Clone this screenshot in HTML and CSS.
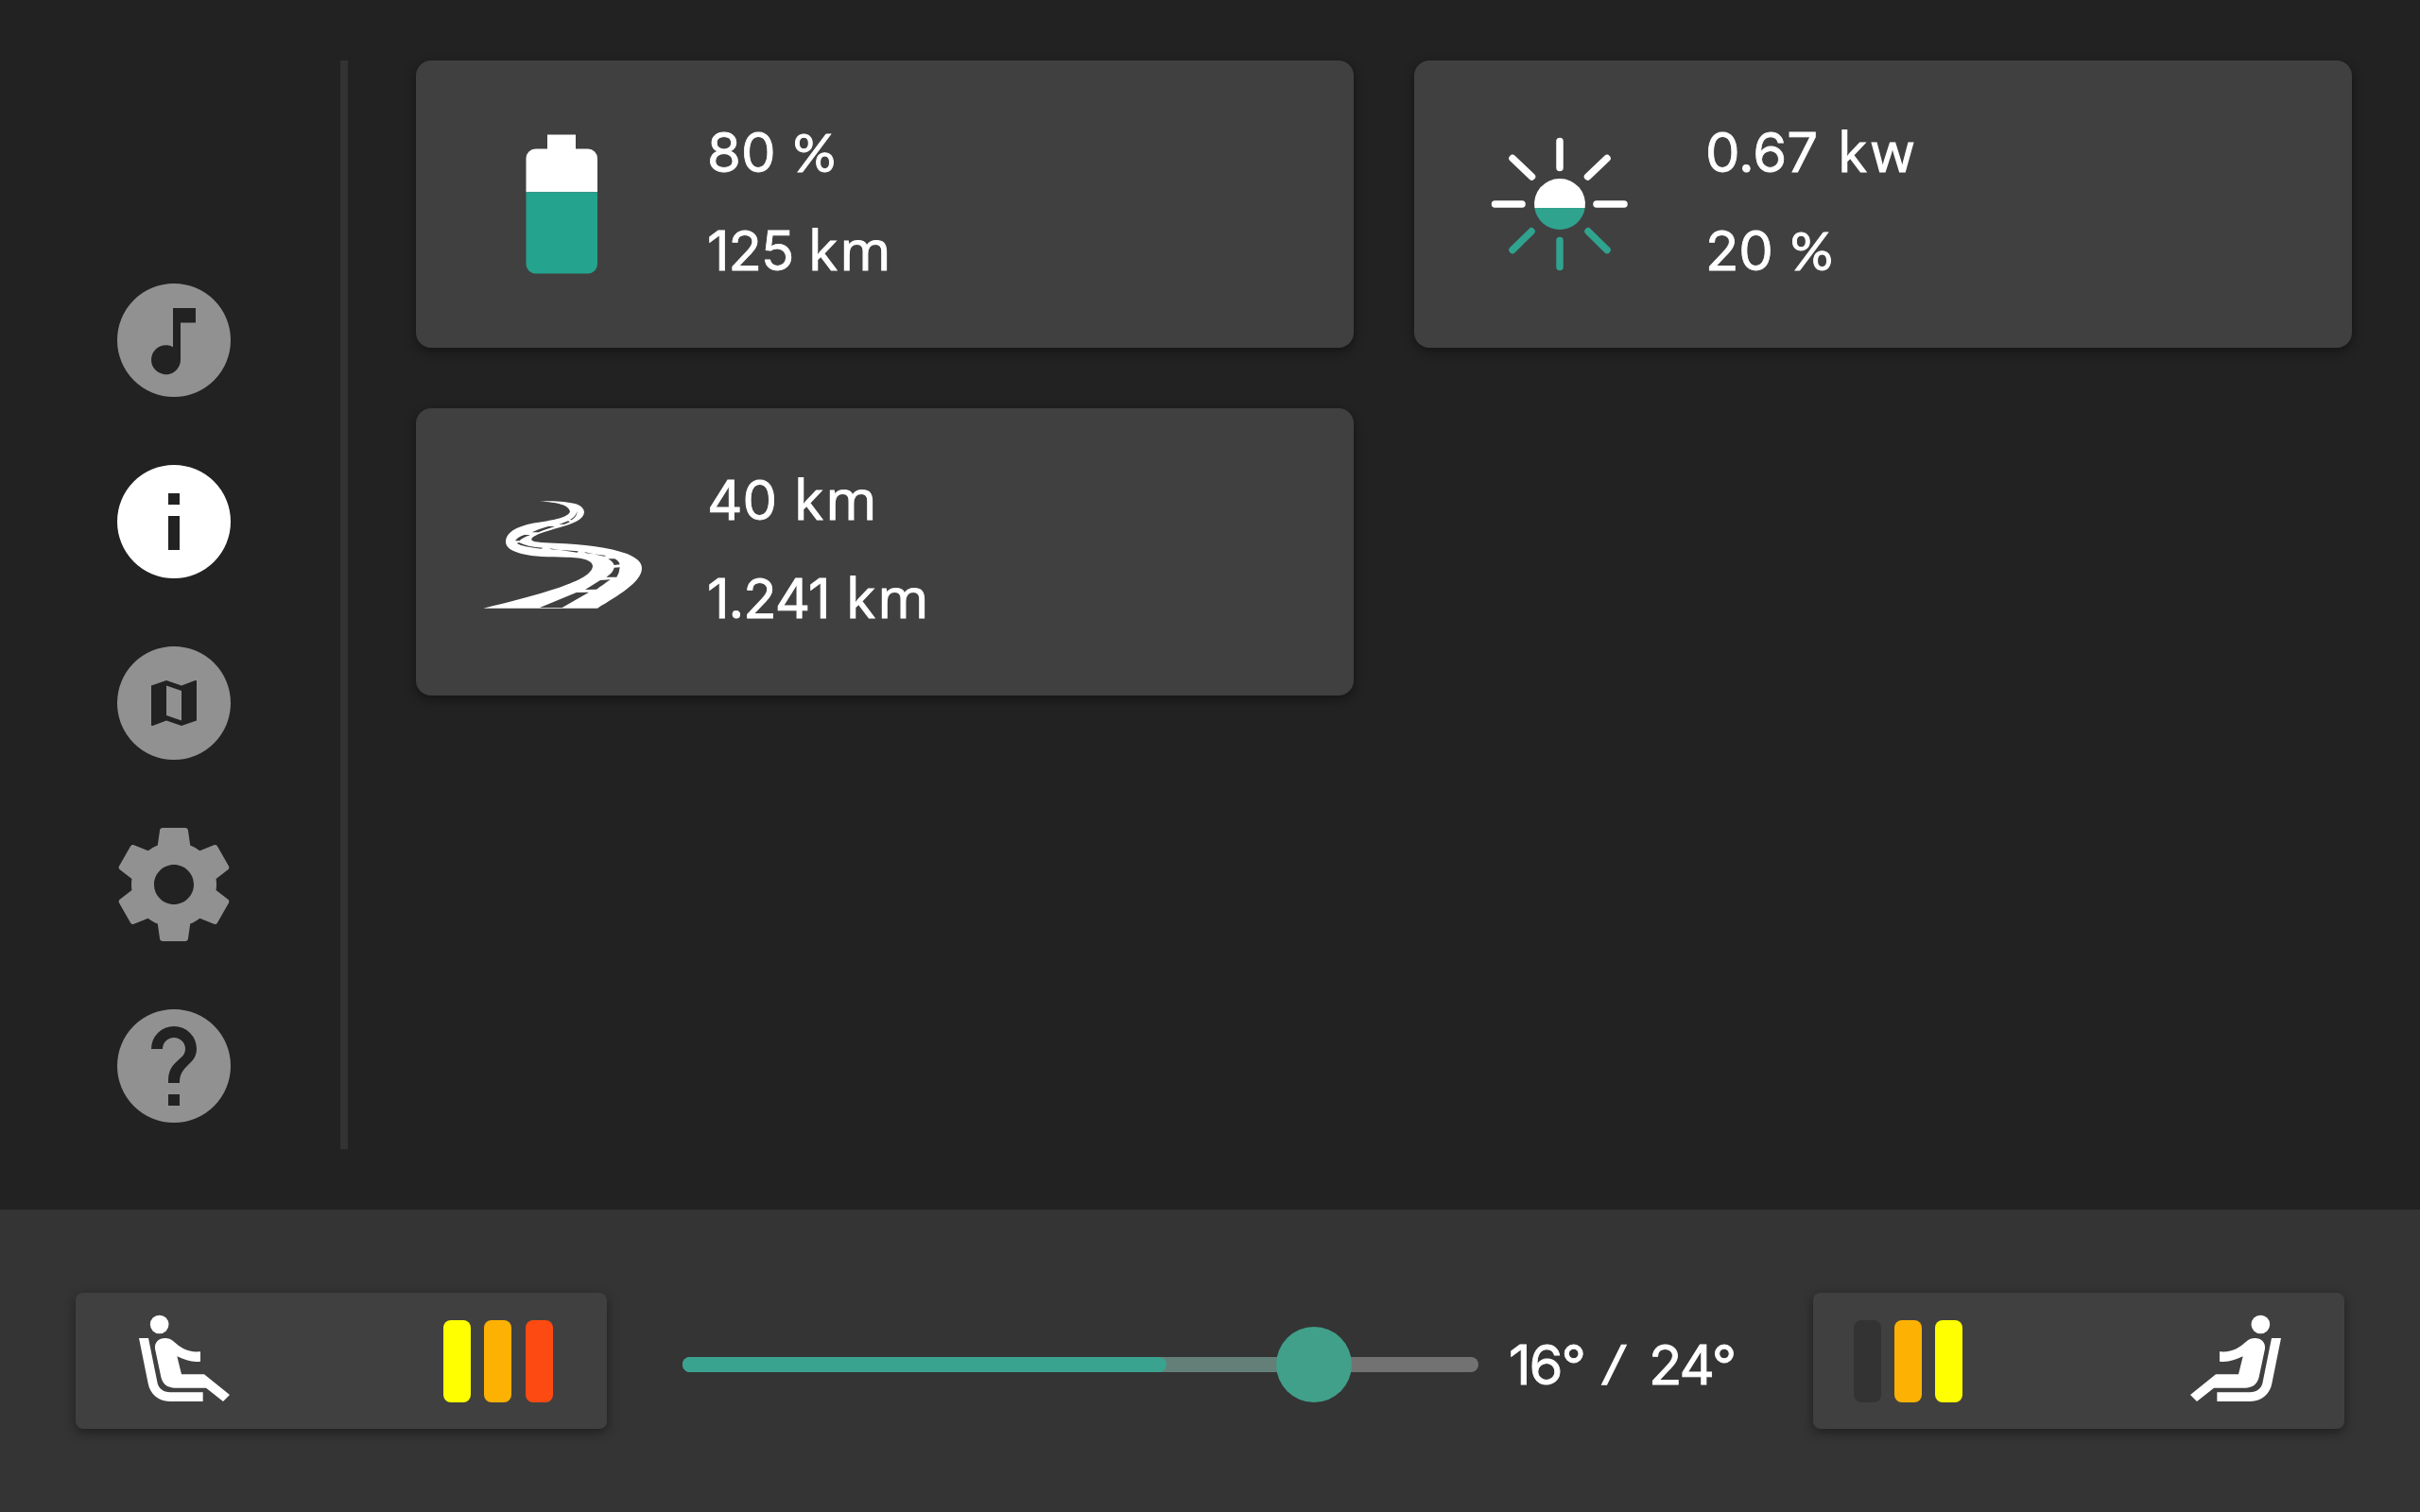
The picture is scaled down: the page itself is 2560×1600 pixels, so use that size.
FILE: index.html
```html
<!DOCTYPE html>
<html lang="en">
<head>
<meta charset="utf-8">
<title>Car dashboard</title>
<link rel="stylesheet" href="styles.css">
</head>
<body>
<div class="dashboard">
  <div class="main">
    <nav class="sidebar">
      <a class="nav-item"><svg viewBox="0 0 120 120"><path fill-rule="evenodd" d="M60 0a60 60 0 1 0 0 120a60 60 0 1 0 0-120zM59 26V67.2A15.5 15.5 0 1 0 67 80.5V41.5H83V26z"/></svg></a>
      <a class="nav-item active"><svg viewBox="0 0 120 120"><path fill-rule="evenodd" d="M60 0a60 60 0 1 0 0 120a60 60 0 1 0 0-120zM54 30h12v12h-12zM54 54h12v36h-12z"/></svg></a>
      <a class="nav-item"><svg viewBox="0 0 120 120"><path fill-rule="evenodd" d="M60 0a60 60 0 1 0 0 120a60 60 0 1 0 0-120zM36 41.4L52 36L68 41.5L82.500 36.100Q84 35.700 84 37V78.400L68 84L52 78.500L37.500 83.900Q36 84.400 36 83zM52 41.500V73L68 78.500V47z"/></svg></a>
      <a class="nav-item"><svg viewBox="2 2 20 20"><path d="M19.430 12.980c.04-.32.07-.64.07-.98s-.03-.66-.07-.98l2.110-1.650c.19-.15.24-.42.12-.64l-2-3.460c-.12-.22-.39-.3-.61-.22l-2.490 1c-.52-.4-1.080-.73-1.690-.98l-.38-2.650C14.460 2.180 14.250 2 14 2h-4c-.25 0-.46.18-.49.42l-.38 2.650c-.61.25-1.170.59-1.690.98l-2.490-1c-.23-.09-.49 0-.61.22l-2 3.460c-.13.22-.07.49.12.64l2.110 1.650c-.04.32-.07.65-.07.98s.03.66.07.98l-2.110 1.650c-.19.15-.24.42-.12.64l2 3.460c.12.22.39.3.61.22l2.490-1c.52.4 1.080.73 1.690.98l.38 2.650c.03.24.24.42.49.42h4c.25 0 .46-.18.49-.42l.38-2.650c.61-.25 1.170-.59 1.690-.98l2.490 1c.23.09.49 0 .61-.22l2-3.460c.12-.22.07-.49-.12-.64l-2.110-1.650zM12 15.500c-1.930 0-3.500-1.570-3.500-3.500s1.570-3.500 3.500-3.500 3.500 1.570 3.500 3.500-1.570 3.500-3.500 3.500z"/></svg></a>
      <a class="nav-item"><svg viewBox="0 0 120 120"><path fill-rule="evenodd" d="M60 0a60 60 0 1 0 0 120a60 60 0 1 0 0-120zM54 90h12v12h-12zM54 78V75C54 61 62.500 56 68.200 50.500C70.600 48.200 72 45.500 72 42a12 12 0 0 0-24 0H36a24 24 0 0 1 48 0C84 47.300 82 52 78.400 55.500L73 61C68.200 66 66 70 66 78z"/></svg></a>
    </nav>
    <main class="cards">
      <section class="card">
        <div class="card-icon">
          <svg viewBox="444 110 300 212">
            <path class="white" d="M579 142.500h30v15h13a10 10 0 0 1 10 10v35.800h-75.500V167.500a10 10 0 0 1 10-10H579z"/>
            <path class="battery-fill" d="M556.500 203.300H632V279.500a10 10 0 0 1-10 10h-55.500a10 10 0 0 1-10-10z"/>
          </svg>
        </div>
        <div class="readings">
          <p class="row"><span class="num w-80">80</span> <span class="percent">%</span></p>
          <p class="row"><span class="num w-125">125</span> <span class="unit">km</span></p>
        </div>
      </section>
      <section class="card">
        <div class="card-icon">
          <svg viewBox="1500 110 300 212">
            <path class="white" d="M1623.300 220A27 27 0 1 1 1676.700 220z"/>
            <path class="teal" d="M1623.300 220H1676.700A27 27 0 0 1 1623.300 220z"/>
            <path class="rays-white" d="M1650 149.500V177.500M1600 167.500L1620.500 187M1700 167.500L1679.500 187M1581.500 216H1610M1689 216H1718"/>
            <path class="rays-teal" d="M1650 254.500V282.500M1600 264.500L1620 244.800M1700 264.500L1680 244.800"/>
          </svg>
        </div>
        <div class="readings">
          <p class="row"><span class="num w-067">0.67</span> <span class="unit unit-kw">kw</span></p>
          <p class="row"><span class="num w-20">20</span> <span class="percent">%</span></p>
        </div>
      </section>
      <section class="card">
        <div class="card-icon">
          <svg viewBox="-168 -96 900 636">
            <path class="white" d="M34 401C120 380 205 358 275 335C340 313 378 292 381 268C382 249 350 240 300 239C240 238 195 238 155 228C122 220 105 207 105 190C106 158 145 138 205 129C260 121 303 113 309 94C304 72 270 66 213 61C262 59 300 62 325 69C345 75 354 86 354 97C352 120 316 134 275 145C230 158 187 170 187 183C187 191 215 192 260 194C350 198 435 207 490 228C522 241 537 256 537 274C537 318 460 362 396 401z"/>
            <path class="lane" d="M213 399L329 351L369 350L284 399zM357 342L405 312L437 310C420 322 408 331 393 341zM424 302Q446 288 449 272L467 271Q466 288 457 302zM430 244Q447 255 449 264L467 262Q464 250 451 244zM354 222L417 236L424 234L360 226zM244 211L332 224L335 220L250 214zM140 195Q158 206 217 212L223 209Q176 207 147 192zM135 187Q142 175 164 168H183Q153 179 149 187zM188 160Q210 149 240 141H261Q229 151 209 160zM274 135L303 124L309 127L292 134zM309 120Q328 109 332 92Q332 109 314 121z"/>
          </svg>
        </div>
        <div class="readings">
          <p class="row"><span class="num w-40">40</span> <span class="unit">km</span></p>
          <p class="row"><span class="num w-1241">1.241</span> <span class="unit">km</span></p>
        </div>
      </section>
    </main>
  </div>
  <footer class="climate">
    <div class="seat">
      <svg class="seat-icon" viewBox="0 0 390 360"><circle cx="116" cy="64.500" r="29.500"/><path d="M51 108H81L110 252C115 268 127 279 150 280H254V309H148C112 308 86 285 80 252zM102 142C100 121 114 108 134 108C144 108 152 111 160 118C184 139 204 154 246 151V182C218 185 198 178 172 166L186 223H258L339 288L318 309L264 266H165C141 266 126 254 121 232z"/></svg>
      <div class="levels"><i class="level low"></i><i class="level mid"></i><i class="level high"></i></div>
    </div>
    <div class="slider"><div class="track"><div class="target"></div><div class="current"></div></div><div class="thumb"></div></div>
    <div class="temperature"><span class="t-now">16°</span> <span class="t-sep">/</span> <span class="t-set">24°</span></div>
    <div class="seat seat-right">
      <svg class="seat-icon" viewBox="0 0 390 360"><circle cx="116" cy="64.500" r="29.500"/><path d="M51 108H81L110 252C115 268 127 279 150 280H254V309H148C112 308 86 285 80 252zM102 142C100 121 114 108 134 108C144 108 152 111 160 118C184 139 204 154 246 151V182C218 185 198 178 172 166L186 223H258L339 288L318 309L264 266H165C141 266 126 254 121 232z"/></svg>
      <div class="levels"><i class="level low"></i><i class="level mid"></i><i class="level off"></i></div>
    </div>
  </footer>
</div>
</body>
</html>
```
FILE: styles.css
```css
* { box-sizing: border-box; }
body { margin: 0; background: #222; color: #fff; font-family: Inter, "Open Sans", sans-serif; font-weight: 400; }
svg { display: block; }
p { margin: 0; }
.dashboard { width: 2560px; height: 1600px; display: flex; flex-direction: column; overflow: hidden; }
.main { height: 1280px; padding: 64px 72px 64px 124px; display: flex; }
.sidebar { width: 244px; border-right: 8px solid #333; display: flex; flex-direction: column; gap: 72px; padding-top: 236px; }
.nav-item { width: 120px; height: 120px; fill: #919191; }
.nav-item.active { fill: #fff; }
.nav-item svg { width: 120px; height: 120px; }
.cards { margin-left: 72px; display: grid; grid-template-columns: 992px 992px; grid-auto-rows: 304px; gap: 64px; }
.card { display: flex; background: #404040; border-radius: 16px; box-shadow: 0 4px 12px rgba(0, 0, 0, .4); }
.card-icon { width: 308px; padding: 46px 4px; }
.card-icon svg { width: 300px; height: 212px; }
.white { fill: #fff; }
.battery-fill { fill: #24a38e; }
.teal { fill: #30a38f; }
.lane { fill: #404040; }
.rays-white, .rays-teal { fill: none; stroke: #fff; stroke-width: 7.500px; stroke-linecap: round; }
.rays-teal { stroke: #30a38f; }
.readings { padding-top: 45px; }
.row { display: flex; align-items: baseline; height: 104px; line-height: 104px; font-size: 58px; white-space: nowrap; }
.num, .unit, .percent { line-height: 1; }
.row::before { content: ""; width: 0; height: 73px; display: inline-block; }
.num, .t-now, .t-set { -webkit-text-stroke: .8px #fff; }
.unit { font-family: "Open Sans", sans-serif; letter-spacing: 3px; -webkit-text-stroke: 1.200px #fff; }
.unit-kw { letter-spacing: 5px; }
.percent { font-family: Lato, sans-serif; font-size: 56px; -webkit-text-stroke: 1px #fff; }
.w-80 { width: 91px; }
.w-125 { width: 107px; letter-spacing: -1px; }
.w-067 { width: 140px; }
.w-20 { width: 90px; }
.w-40 { width: 92px; }
.w-1241 { width: 147px; letter-spacing: -1px; }
.climate { height: 320px; background: #343434; padding: 88px 80px; display: flex; }
.seat { width: 562px; height: 144px; background: #404040; border-radius: 8px; box-shadow: 0 4px 12px rgba(0, 0, 0, .4); display: flex; justify-content: space-between; padding: 12px 57.500px 0 50px; }
.seat-right { flex-direction: row-reverse; padding: 12px 50px 0 43px; margin-left: auto; }
.seat-right .seat-icon { transform: scaleX(-1); }
.seat-icon { width: 130px; height: 120px; fill: #fff; }
.levels { display: flex; gap: 14.200px; padding-top: 16.500px; }
.seat-right .levels { flex-direction: row-reverse; }
.level { width: 29px; height: 87px; border-radius: 8px; }
.low { background: #ff0; }
.mid { background: #fcb103; }
.high { background: #fc4a12; }
.off { background: #333; }
.slider { position: relative; width: 842px; margin-left: 80px; padding-top: 68px; }
.track { position: relative; height: 16px; border-radius: 8px; background: #727272; }
.target, .current { position: absolute; left: 0; top: 0; height: 16px; border-radius: 8px; }
.target { width: 668px; background: #637f78; }
.current { width: 512px; background: #3aa38f; }
.thumb { position: absolute; left: 628px; top: 36px; width: 80px; height: 80px; border-radius: 50%; background: #41a08a; }
.temperature { display: flex; align-items: baseline; margin-left: 32px; padding-top: 23px; height: 104px; line-height: 104px; font-size: 58px; white-space: nowrap; }
.t-now { width: 101px; letter-spacing: -2px; }
.t-sep { width: 47px; font-family: "Open Sans", sans-serif; transform: skewX(-7deg); -webkit-text-stroke: 1.500px #fff; }
.t-set { letter-spacing: -2px; }
```
